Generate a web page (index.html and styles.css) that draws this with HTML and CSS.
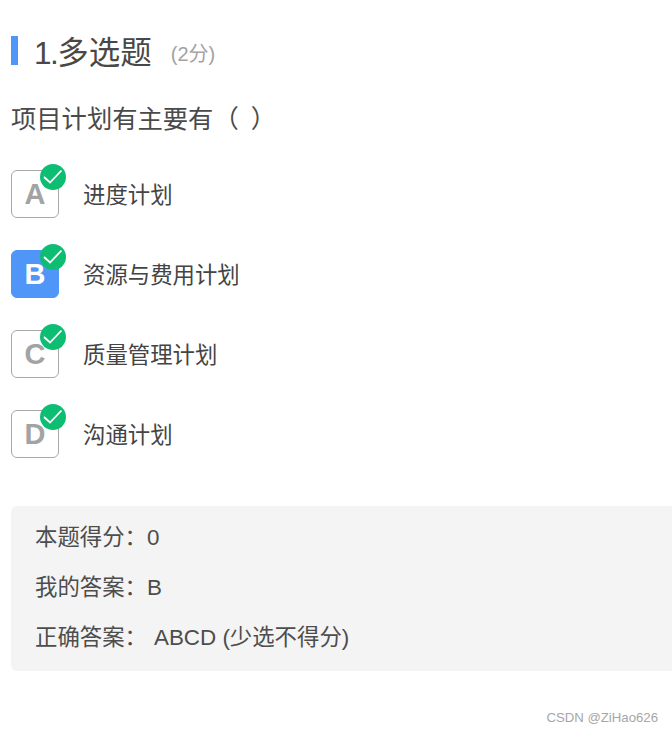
FILE: index.html
```html
<!DOCTYPE html>
<html>
  <head>
    <title>多选题</title>
    <link rel="stylesheet" href="styles.css">
  </head>

  <body>
    <div class="container">
      <div class="title">
        <span class="title-mark"></span>
        <h1><span class="num">1.</span>多选题</h1>
        <span class="score">(2分)</span>
      </div>
      <p class="question">项目计划有主要有（ ）</p>

      <ul class="options">
        <li class="option">
          <div class="letter">A
            <svg class="check" viewBox="0 0 26 26"><circle cx="13" cy="13" r="13" fill="#0dbd72"/><path d="M4 13l6 5.5L21.5 6.5" fill="none" stroke="#fff" stroke-width="1.8"/></svg>
          </div>
          <span class="option-text">进度计划</span>
        </li>
        <li class="option">
          <div class="letter selected">B
            <svg class="check" viewBox="0 0 26 26"><circle cx="13" cy="13" r="13" fill="#0dbd72"/><path d="M4 13l6 5.5L21.5 6.5" fill="none" stroke="#fff" stroke-width="1.8"/></svg>
          </div>
          <span class="option-text">资源与费用计划</span>
        </li>
        <li class="option">
          <div class="letter">C
            <svg class="check" viewBox="0 0 26 26"><circle cx="13" cy="13" r="13" fill="#0dbd72"/><path d="M4 13l6 5.5L21.5 6.5" fill="none" stroke="#fff" stroke-width="1.8"/></svg>
          </div>
          <span class="option-text">质量管理计划</span>
        </li>
        <li class="option">
          <div class="letter">D
            <svg class="check" viewBox="0 0 26 26"><circle cx="13" cy="13" r="13" fill="#0dbd72"/><path d="M4 13l6 5.5L21.5 6.5" fill="none" stroke="#fff" stroke-width="1.8"/></svg>
          </div>
          <span class="option-text">沟通计划</span>
        </li>
      </ul>

      <div class="result">
        <p>本题得分：<span class="value">0</span></p>
        <p>我的答案：<span class="value">B</span></p>
        <p>正确答案：<span class="value answer">ABCD (少选不得分)</span></p>
      </div>

      <div class="watermark">CSDN @ZiHao626</div>
    </div>
  </body>
</html>
```

FILE: styles.css
```css
body {
  font-family: "Liberation Sans", "Noto Sans CJK SC", sans-serif;
  background-color: #fff;
  color: #4a4a4a;
  margin: 0;
  padding: 0;
}

.container {
  height: 732px;
  padding: 31px 0 0 11px;
  box-sizing: border-box;
  overflow: hidden;
}

.title {
  display: flex;
  align-items: center;
  height: 38px;
}

.title-mark {
  width: 7px;
  height: 29px;
  background-color: #5096f8;
  margin-right: 16px;
}

.title h1 {
  margin: 0;
  font-size: 31.5px;
  font-weight: normal;
  color: #484848;
}

.num {
  letter-spacing: -1.5px;
}

.score {
  margin: 4px 0 0 19px;
  font-size: 20px;
  color: #a3a3a3;
}

.question {
  margin: 33px 0 0;
  font-size: 25.3px;
  line-height: 34px;
  word-spacing: 5px;
  color: #4a4a4a;
}

.options {
  list-style: none;
  margin: 34px 0 0;
  padding: 0;
}

.option {
  display: flex;
  align-items: center;
  height: 48px;
  margin-bottom: 32px;
  font-size: 22.4px;
  color: #444;
}

.option-text {
  margin-bottom: 2px;
}

.letter {
  position: relative;
  width: 48px;
  height: 48px;
  box-sizing: border-box;
  margin-right: 24px;
  border: 1px solid #a8a8a8;
  border-radius: 6px;
  font-size: 29px;
  font-weight: bold;
  line-height: 46px;
  text-align: center;
  color: #a3a3a3;
}

.letter.selected {
  background-color: #5096f8;
  border-color: #5096f8;
  color: #fff;
}

.check {
  position: absolute;
  top: -7px;
  right: -8px;
  width: 26px;
  height: 26px;
}

.result {
  margin-top: 48px;
  height: 165px;
  box-sizing: border-box;
  padding: 7px 24px;
  background-color: #f4f4f4;
  border-radius: 6px 0 0 6px;
}

.result p {
  margin: 0;
  height: 50px;
  font-size: 22.4px;
  line-height: 50px;
  color: #4d4d4d;
}

.answer {
  margin-left: 7px;
}

.watermark {
  margin-top: 39px;
  padding-right: 14px;
  text-align: right;
  font-size: 13.2px;
  color: #a6a6a6;
}
```
